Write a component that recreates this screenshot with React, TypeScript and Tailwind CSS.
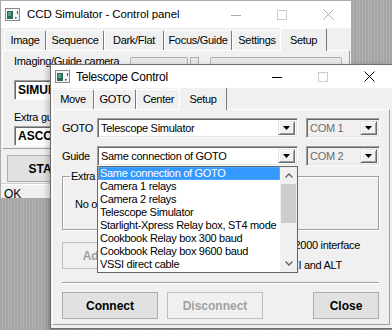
import React from "react";

const font = "font-['Liberation_Sans',Arial,sans-serif]";
const txt = "text-[11px] leading-[13px] tracking-[-0.3px]";

function AppIcon() {
  return (
    <svg width="15" height="13" viewBox="0 0 15 13">
      <rect x="0.5" y="0.5" width="14" height="12" fill="#f6f6f6" stroke="#8a8a8a" />
      <rect x="2" y="3" width="6" height="8" fill="#2d6b5e" />
      <rect x="3" y="4" width="3" height="4" fill="#58a08c" />
      <rect x="10" y="9" width="1.5" height="1.5" fill="#2050c0" />
      <rect x="12" y="3" width="1" height="3" fill="#2050c0" />
    </svg>
  );
}

function CaptionButtons({ dim }: { dim?: boolean }) {
  const stroke = dim ? "#a8a8a8" : "#000000";
  return (
    <div className="flex h-full">
      <div className="w-[46px] flex items-center justify-center">
        <svg width="10" height="10" viewBox="0 0 10 10">
          <line x1="0" y1="5.5" x2="10" y2="5.5" stroke={stroke} />
        </svg>
      </div>
      <div className="w-[46px] flex items-center justify-center">
        <svg width="10" height="10" viewBox="0 0 10 10">
          <rect x="0.5" y="0.5" width="9" height="9" fill="none" stroke="#cccccc" />
        </svg>
      </div>
      <div className="w-[46px] flex items-center justify-center">
        <svg width="11" height="11" viewBox="0 0 11 11">
          <path d="M0.5 0.5 L10.5 10.5 M10.5 0.5 L0.5 10.5" stroke={stroke} />
        </svg>
      </div>
    </div>
  );
}

function Tab({ label, w, active }: { label: string; w: string; active?: boolean }) {
  return (
    <div
      className={`${w} ${
        active ? "h-[23px] -mb-px z-10 -mx-[2px] bg-[#f0f0f0]" : "mt-[2px] h-[20px] bg-[#f0f0f0]"
      } shrink-0 flex items-center justify-center border-l border-t border-r border-l-white border-t-white border-r-[#7a7a7a] rounded-t-[2px] ${txt}`}
    >
      {label}
    </div>
  );
}

function Arrow() {
  return (
    <div className="w-[17px] h-full bg-[#f0f0f0] border border-t-[#e3e3e3] border-l-[#e3e3e3] border-b-[#696969] border-r-[#696969] shadow-[inset_1px_1px_0_#ffffff,inset_-1px_-1px_0_#a0a0a0] flex items-center justify-center">
      <svg width="7" height="4" viewBox="0 0 7 4">
        <polygon points="0,0 7,0 3.5,4" fill="#000" />
      </svg>
    </div>
  );
}

function Combo({ text, w, disabled }: { text: string; w: string; disabled?: boolean }) {
  return (
    <div
      className={`${w} h-[20px] flex p-[2px] border border-t-[#a0a0a0] border-l-[#a0a0a0] border-b-white border-r-white shadow-[inset_1px_1px_0_#696969,inset_-1px_-1px_0_#e3e3e3] ${
        disabled ? "bg-[#f0f0f0] text-[#6d6d6d]" : "bg-white text-black"
      }`}
    >
      <div className={`flex-1 pl-[1px] flex items-center ${txt}`}>{text}</div>
      <Arrow />
    </div>
  );
}

function Btn({ label, w, disabled }: { label: string; w: string; disabled?: boolean }) {
  return (
    <div
      className={`${w} h-[27px] border flex items-center justify-center text-[12px] font-bold ${
        disabled ? "border-[#bfbfbf] bg-[#f0f0f0] text-[#a0a0a0]" : "border-[#adadad] bg-[#e1e1e1] text-black"
      }`}
    >
      {label}
    </div>
  );
}

function Sunken({ text, w }: { text: string; w: string }) {
  return (
    <div className={`${w} h-[20px] bg-white flex items-center pl-[3px] border border-t-[#a0a0a0] border-l-[#a0a0a0] border-b-white border-r-white shadow-[inset_1px_1px_0_#696969] text-[12px] font-bold`}>
      {text}
    </div>
  );
}

const guideItems = [
  "Same connection of GOTO",
  "Camera 1 relays",
  "Camera 2 relays",
  "Telescope Simulator",
  "Starlight-Xpress Relay box, ST4 mode",
  "Cookbook Relay box 300 baud",
  "Cookbook Relay box 9600 baud",
  "VSSI direct cable",
];

function DropList() {
  return (
    <div className="absolute left-[46px] top-[101px] w-[201px] h-[107px] bg-white border border-[#646464] flex z-20">
      <div className="flex-1 flex flex-col overflow-hidden">
        {guideItems.map((it, i) => (
          <div
            key={it}
            className={`h-[13px] pl-[2px] whitespace-nowrap ${txt} ${
              i === 0 ? "bg-[#3399ff] text-white outline-1 outline-dotted outline-[#e0a050] -outline-offset-1" : "text-black"
            }`}
          >
            {it}
          </div>
        ))}
      </div>
      <div className="w-[17px] bg-[#f0f0f0] flex flex-col">
        <div className="h-[17px] flex items-center justify-center">
          <svg width="8" height="5" viewBox="0 0 8 5">
            <polyline points="0.5,4.5 4,1 7.5,4.5" fill="none" stroke="#606060" strokeWidth="1.3" />
          </svg>
        </div>
        <div className="mx-[1px] h-[39px] bg-[#cdcdcd]" />
        <div className="flex-1" />
        <div className="h-[17px] flex items-center justify-center">
          <svg width="8" height="5" viewBox="0 0 8 5">
            <polyline points="0.5,0.5 4,4 7.5,0.5" fill="none" stroke="#606060" strokeWidth="1.3" />
          </svg>
        </div>
      </div>
    </div>
  );
}

function BackWindow() {
  return (
    <div className="absolute left-0 top-0 w-[352px] h-[199px] bg-[#f0f0f0] border border-[#aaaaaa] flex flex-col">
      <div className="h-[27px] bg-white flex items-center shrink-0">
        <div className="pl-[4px] pr-[7px]">
          <AppIcon />
        </div>
        <div className="flex-1 text-[11.5px] text-[#000] tracking-[-0.1px]">CCD Simulator - Control panel</div>
        <CaptionButtons dim />
      </div>
      <div className="h-[22px] flex items-end pl-[3px] shrink-0">
        <Tab label="Image" w="w-[42px]" />
        <Tab label="Sequence" w="w-[58px]" />
        <Tab label="Dark/Flat" w="w-[60px]" />
        <Tab label="Focus/Guide" w="w-[68px]" />
        <Tab label="Settings" w="w-[50px]" />
        <Tab label="Setup" w="w-[47px]" active />
      </div>
      <div className="mx-[1px] h-[99px] shrink-0 border border-t-white border-l-white border-r-[#a0a0a0] border-b-[#a0a0a0] pl-[11px] pt-[4px] flex flex-col">
        <div className="flex items-start">
          <span className={`w-[116px] ${txt}`}>Imaging/Guide camera</span>
          <div className="mt-[2px] w-[58px] h-[20px] border border-[#adadad] bg-[#e8e8e8] rounded-[2px]" />
          <div className="mt-[2px] ml-[2px] w-[9px] h-[20px] border border-[#adadad] bg-[#e8e8e8]" />
          <div className="mt-[2px] ml-[11px] w-[132px] h-[20px] border border-[#adadad] bg-[#e8e8e8] rounded-[2px]" />
        </div>
        <div className="mt-[3px]">
          <Sunken text="SIMULATOR" w="w-[180px]" />
        </div>
        <span className={`mt-[11px] ${txt}`}>Extra guide camera</span>
        <div className="mt-[2px]">
          <Sunken text="ASCOM" w="w-[180px]" />
        </div>
      </div>
      <div className="mt-[6px] ml-[6px]">
        <Btn label="START" w="w-[82px]" />
      </div>
      <div className="mt-[2px] flex-1 border-t border-[#ffffff] shadow-[0_-1px_0_#d0d0d0] pl-[3px] flex items-center text-[12px]">
        OK
      </div>
    </div>
  );
}

function FrontWindow() {
  return (
    <div className="absolute left-[50px] top-[64px] w-[343px] h-[265px] bg-[#f0f0f0] border border-[#6e6e6e] shadow-[-2px_2px_6px_rgba(0,0,0,0.25)] flex flex-col">
      <div className="h-[23px] bg-white flex items-center shrink-0">
        <div className="pl-[4px] pr-[6px]">
          <AppIcon />
        </div>
        <div className="flex-1 text-[12px] tracking-[-0.25px]">Telescope Control</div>
        <CaptionButtons />
      </div>
      <div className="h-[21px] flex items-end pl-[1px] shrink-0">
        <Tab label="Move" w="w-[42px]" />
        <Tab label="GOTO" w="w-[42px]" />
        <Tab label="Center" w="w-[45px]" />
        <Tab label="Setup" w="w-[48px]" active />
      </div>
      <div className="ml-[1px] mr-[2px] h-[216px] shrink-0 border border-t-white border-l-white border-r-[#a0a0a0] border-b-[#a0a0a0] pl-[9px] pt-[8px] flex flex-col">
        <div className="flex items-center">
          <span className={`w-[35px] ${txt}`}>GOTO</span>
          <Combo text="Telescope Simulator" w="w-[201px]" />
          <div className="ml-[8px]">
            <Combo text="COM 1" w="w-[74px]" disabled />
          </div>
        </div>
        <div className="mt-[8px] flex items-center">
          <span className={`w-[35px] ${txt}`}>Guide</span>
          <Combo text="Same connection of GOTO" w="w-[201px]" />
          <div className="ml-[8px]">
            <Combo text="COM 2" w="w-[74px]" disabled />
          </div>
        </div>
        <fieldset className="mt-[4px] w-[317px] h-[60px] border border-[#a0a0a0] shadow-[inset_1px_1px_0_#ffffff,1px_1px_0_#ffffff] px-[7px]">
          <legend className={`px-[1px] ${txt}`}>Extra parameters</legend>
          <div className={`mt-[15px] pl-[5px] ${txt}`}>No option for this device</div>
        </fieldset>
        <div className="mt-[12px] h-[27px] flex items-start">
          <Btn label="Advanced setup" w="w-[134px]" disabled />
          <div className="ml-[45px] -mt-[3px] flex flex-col gap-[7px]">
            <div className={`whitespace-nowrap ${txt}`}>Use Ultima 2000 interface</div>
            <div className={`ml-[3px] whitespace-nowrap ${txt}`}>Reverse AZI and ALT</div>
          </div>
        </div>
        <div className="mt-[13px] w-[317px] h-[2px] border-t border-[#a0a0a0] border-b border-b-white" />
        <div className="mt-[8px] w-[317px] flex items-center">
          <Btn label="Connect" w="w-[96px]" />
          <div className="ml-[9px]">
            <Btn label="Disconnect" w="w-[96px]" disabled />
          </div>
          <div className="flex-1" />
          <Btn label="Close" w="w-[66px]" />
        </div>
      </div>
      <DropList />
    </div>
  );
}

export default function App() {
  return (
    <div
      className={`relative w-[392px] h-[330px] overflow-hidden ${font} text-black bg-[repeating-linear-gradient(90deg,#a5a5a5_0px,#a5a5a5_2px,#b2b2b2_2px,#b2b2b2_3px)]`}
    >
      <BackWindow />
      <FrontWindow />
    </div>
  );
}
